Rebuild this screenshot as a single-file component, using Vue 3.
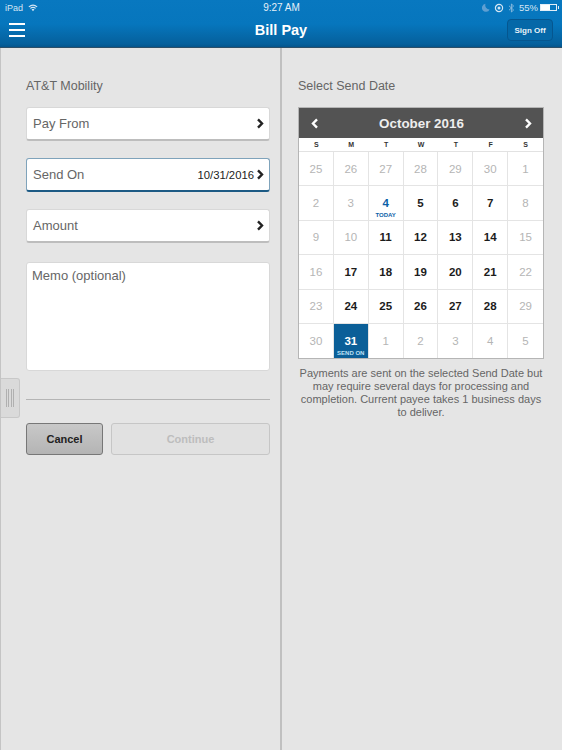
<template>
  <div class="page">
    <header class="top">
      <div class="status">
        <div class="st-left">
          <span>iPad</span>
          <svg width="10" height="8" viewBox="0 0 12 9"><path d="M1 3.2C4 .6 8 .6 11 3.2M2.8 5C4.8 3.4 7.2 3.4 9.2 5" fill="none" stroke="#d5e6f4" stroke-width="1.3"/><path d="M4.3 6.3C5.3 5.5 6.7 5.5 7.7 6.3L6 8.3Z" fill="#d5e6f4"/></svg>
        </div>
        <div class="st-time">9:27 AM</div>
        <div class="st-right">
          <svg width="8" height="9" viewBox="0 0 8 9"><path d="M3.5 .8A4 4 0 1 0 7.6 6.4 4.2 4.2 0 0 1 3.5 .8Z" fill="#5f9fd2"/></svg>
          <svg width="10" height="10" viewBox="0 0 10 10"><circle cx="5" cy="5" r="3.6" fill="none" stroke="#d5e6f4" stroke-width="1.2"/><circle cx="5" cy="5" r="1.5" fill="#d5e6f4"/></svg>
          <svg width="7" height="10" viewBox="0 0 7 10"><path d="M1 2.8 5.6 7 3.4 9V1L5.6 3 1 7.2" fill="none" stroke="#8fbde0" stroke-width=".9"/></svg>
          <span>55%</span>
          <div class="batt"><div class="batt-fill"></div></div>
        </div>
      </div>
      <div class="nav">
        <div class="burger"><i></i><i></i><i></i></div>
        <div class="title">Bill Pay</div>
        <button class="signoff">Sign Off</button>
      </div>
    </header>

    <main class="panes">
      <section class="left">
        <div class="pane-title">AT&amp;T Mobility</div>
        <div v-for="f in fields" :key="f.label" class="field" :class="{ active: f.active }">
          <span class="f-label">{{ f.label }}</span>
          <span class="f-val">{{ f.value }}</span>
          <svg class="chev" width="8" height="11" viewBox="0 0 8 11"><path d="M2 1.4 6 5.5 2 9.6" fill="none" stroke="#222" stroke-width="2.4"/></svg>
        </div>
        <div class="memo">Memo (optional)</div>
        <div class="rule"></div>
        <div class="buttons">
          <button class="cancel">Cancel</button>
          <button class="continue">Continue</button>
        </div>
        <div class="handle"><i></i><i></i><i></i><i></i></div>
      </section>

      <section class="right">
        <div class="pane-title">Select Send Date</div>
        <div class="cal">
          <div class="cal-head">
            <svg width="8" height="11" viewBox="0 0 8 11"><path d="M6 1.4 2 5.5 6 9.6" fill="none" stroke="#fff" stroke-width="2.4"/></svg>
            <span>October 2016</span>
            <svg width="8" height="11" viewBox="0 0 8 11"><path d="M2 1.4 6 5.5 2 9.6" fill="none" stroke="#fff" stroke-width="2.4"/></svg>
          </div>
          <div class="dow">
            <span v-for="(d, i) in dow" :key="i">{{ d }}</span>
          </div>
          <div class="grid">
            <div v-for="(c, i) in cells" :key="i" class="cell" :class="c.kind">
              <span class="num">{{ c.n }}</span>
              <span v-if="c.note" class="note">{{ c.note }}</span>
            </div>
          </div>
        </div>
        <p class="info">Payments are sent on the selected Send Date but may require several days for processing and completion. Current payee takes 1 business days to deliver.</p>
      </section>
    </main>
  </div>
</template>

<script setup>
const fields = [
  { label: 'Pay From', value: '' },
  { label: 'Send On', value: '10/31/2016', active: true },
  { label: 'Amount', value: '' },
];

const dow = ['S', 'M', 'T', 'W', 'T', 'F', 'S'];

const off = (n) => ({ n, kind: 'off' });
const on = (n) => ({ n, kind: 'on' });

const cells = [
  ...[25, 26, 27, 28, 29, 30, 1, 2, 3].map(off),
  { n: 4, kind: 'today', note: 'TODAY' },
  ...[5, 6, 7].map(on),
  ...[8, 9, 10].map(off),
  ...[11, 12, 13, 14].map(on),
  ...[15, 16].map(off),
  ...[17, 18, 19, 20, 21].map(on),
  ...[22, 23].map(off),
  ...[24, 25, 26, 27, 28].map(on),
  ...[29, 30].map(off),
  { n: 31, kind: 'picked', note: 'SEND ON' },
  ...[1, 2, 3, 4, 5].map(off),
];
</script>

<style>
html, body { margin: 0; background: #e5e5e5; }
</style>

<style scoped>
.page {
  width: 562px;
  height: 750px;
  overflow: hidden;
  display: flex;
  flex-direction: column;
  font-family: "Liberation Sans", Arial, sans-serif;
  background: #e5e5e5;
}
.top {
  height: 48px;
  flex: none;
  box-sizing: border-box;
  background: linear-gradient(#0878c0 0, #0676bd 24px, #05609c 44px, #04558c 47px);
  border-bottom: 1px solid #2c4f68;
  color: #fff;
}
.status {
  height: 15px;
  padding: 0 4px 0 5px;
  display: grid;
  grid-template-columns: 1fr auto 1fr;
  align-items: center;
  font-size: 9.5px;
  color: #d5e6f4;
}
.st-left { display: flex; align-items: center; gap: 5px; font-size: 9px; }
.st-time { font-size: 10px; color: #e6f0f8; }
.st-right { display: flex; align-items: center; justify-content: flex-end; gap: 4px; }
.batt {
  width: 17px;
  height: 7px;
  border: 1px solid #e3eef7;
  box-sizing: border-box;
  margin-left: -2px;
  margin-right: 1px;
  position: relative;
}
.batt::after {
  content: "";
  position: absolute;
  right: -3px;
  top: 1px;
  width: 1px;
  height: 3px;
  background: #e3eef7;
}
.batt-fill { width: 9px; height: 100%; background: #fff; }
.nav {
  height: 32px;
  display: flex;
  align-items: center;
  justify-content: space-between;
  position: relative;
  padding: 0 9px;
}
.burger { display: flex; flex-direction: column; gap: 3.5px; margin-top: -2px; }
.burger i { display: block; width: 16px; height: 2.5px; background: #fff; }
.title {
  position: absolute;
  left: 0;
  right: 0;
  top: 7px;
  text-align: center;
  font-size: 14.5px;
  font-weight: 700;
}
.signoff {
  width: 46px;
  height: 22px;
  padding: 0;
  margin-top: -2px;
  border: 1px solid #05568f;
  border-radius: 4px;
  background: #0568a8;
  color: #e8f2f9;
  font: 700 8px "Liberation Sans", Arial, sans-serif;
}
.panes { flex: 1; display: flex; }
.left {
  width: 282px;
  flex: none;
  box-sizing: border-box;
  border-left: 1px solid #c4c4c4;
  border-right: 2px solid #c0c0c0;
  padding: 0 10px 0 25px;
  position: relative;
}
.right { flex: 1; padding: 0 18px 0 16px; }
.pane-title {
  font-size: 12.5px;
  color: #666;
  margin: 31px 0 13px;
  line-height: 15px;
}
.field {
  height: 34px;
  box-sizing: border-box;
  margin-bottom: 17px;
  padding: 0 5px 0 6px;
  display: flex;
  align-items: center;
  background: #fff;
  border: 1px solid #d8d8d8;
  border-bottom: 2px solid #bdbdbd;
  border-radius: 3px;
}
.field.active {
  border: 1px solid #7fa3bb;
  border-bottom: 2px solid #1c5a84;
}
.f-label { font-size: 13px; color: #666; flex: 1; }
.f-val { font-size: 11.3px; color: #222; margin-right: 2px; }
.chev { flex: none; }
.memo {
  height: 109px;
  box-sizing: border-box;
  margin-top: 19px;
  padding: 5px 5px;
  background: #fff;
  border: 1px solid #d8d8d8;
  border-radius: 3px;
  font-size: 13px;
  color: #666;
}
.rule { height: 1px; background: #b4b4b4; margin: 28px 0 23px; }
.buttons { display: flex; gap: 8px; }
.buttons button {
  height: 32px;
  box-sizing: border-box;
  border-radius: 3px;
  padding: 0;
  font: 700 11px "Liberation Sans", Arial, sans-serif;
}
.cancel {
  width: 77px;
  border: 1px solid #777;
  background: linear-gradient(#c8c8c8, #b4b4b4);
  color: #222;
}
.continue {
  flex: 1;
  border: 1px solid #c6c6c6;
  background: #e1e1e1;
  color: #bdbdbd;
}
.handle {
  position: absolute;
  left: 0;
  top: 330px;
  width: 19px;
  height: 40px;
  box-sizing: border-box;
  border: 1px solid #c8c8c8;
  border-left: 0;
  border-radius: 0 3px 3px 0;
  background: #dadada;
  display: flex;
  justify-content: center;
  align-items: center;
  gap: 1.5px;
}
.handle i { display: block; width: 1px; height: 18px; background: #b0b0b0; }
.cal {
  width: 246px;
  box-sizing: border-box;
  background: #fff;
  border: 1px solid #b5b5b5;
}
.cal-head {
  height: 30px;
  background: #535353;
  color: #eee;
  display: flex;
  align-items: center;
  justify-content: space-between;
  padding: 0 11px 0 12px;
  font-size: 13.4px;
  font-weight: 700;
}
.dow {
  height: 13px;
  display: grid;
  grid-template-columns: repeat(7, 1fr);
  text-align: center;
  font-size: 7px;
  font-weight: 700;
  line-height: 13px;
  color: #333;
}
.grid {
  display: grid;
  grid-template-columns: repeat(7, 1fr);
  grid-auto-rows: 34.4px;
  border-top: 1px solid #e2e2e2;
}
.cell {
  box-sizing: border-box;
  position: relative;
  display: flex;
  align-items: center;
  justify-content: center;
  border-right: 1px solid #e4e4e4;
  border-bottom: 1px solid #e4e4e4;
  font-size: 11.5px;
}
.cell:nth-child(7n) { border-right: 0; }
.cell:nth-last-child(-n+7) { border-bottom: 0; }
.off { color: #b5b5b5; }
.on { color: #1c1c1c; font-weight: 700; }
.today { color: #0c5fa8; font-weight: 700; }
.picked { background: #0b5f98; color: #fff; font-weight: 700; }
.note {
  position: absolute;
  left: 0;
  right: 0;
  bottom: 1px;
  text-align: center;
  font-size: 6px;
  font-weight: 700;
  line-height: 8px;
}
.picked .note { color: #bfe0f5; }
.info {
  margin: 8px 0 0;
  width: 246px;
  text-align: center;
  font-size: 11px;
  line-height: 12.8px;
  color: #666;
}
</style>
